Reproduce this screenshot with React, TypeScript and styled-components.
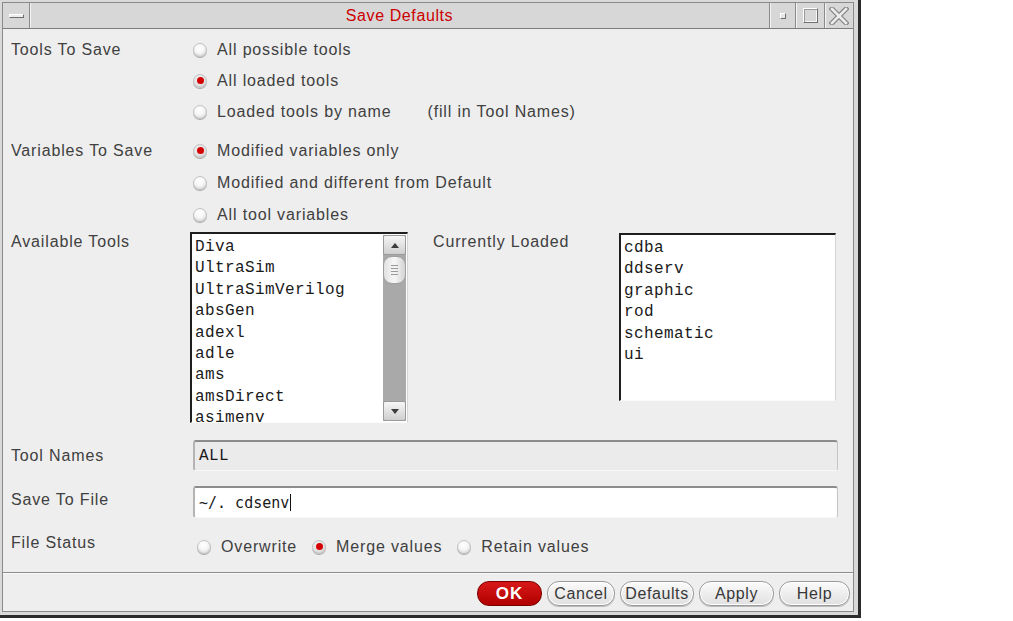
import React from "react";
import styled, { createGlobalStyle, css } from "styled-components";

const Global = createGlobalStyle`
  html, body { margin: 0; padding: 0; background: #ffffff; }
  body { font-family: "Liberation Sans", Arial, sans-serif; }
`;

const Window = styled.div`
  width: 861px;
  height: 618px;
  box-sizing: border-box;
  background: #d9d9d9;
  padding: 2px 4px 3px 2px;
  border-right: 3px solid #2c2c2c;
  border-bottom: 3px solid #2c2c2c;
  display: flex;
`;

const Inner = styled.div`
  flex: 1;
  border: 1px solid #8a8a8a;
  background: #eeeeee;
  display: flex;
  flex-direction: column;
`;

const TitleBar = styled.div`
  height: 26px;
  box-sizing: border-box;
  border-bottom: 1px solid #7c7c7c;
  background: #d7d7d7;
  display: flex;
`;

const MenuButton = styled.div`
  width: 26px;
  border-right: 1px solid #8a8a8a;
  display: flex;
  align-items: center;
  justify-content: center;
`;

const MenuBar = styled.span`
  width: 15px;
  height: 4px;
  box-sizing: border-box;
  background: #ececec;
  border-top: 1px solid #ffffff;
  border-left: 1px solid #ffffff;
  border-bottom: 1px solid #6e6e6e;
  border-right: 1px solid #6e6e6e;
`;

const Title = styled.div`
  flex: 1;
  text-align: center;
  color: #cc0000;
  font-size: 16px;
  letter-spacing: 0.6px;
  line-height: 25px;
  box-shadow: inset 1px 0 #f2f2f2;
`;

const WinBtn = styled.div<{ $w: number }>`
  width: ${(p) => p.$w}px;
  border-left: 1px solid #8a8a8a;
  box-shadow: inset 1px 0 #f4f4f4;
  display: flex;
  align-items: center;
  justify-content: center;
`;

const MinBox = styled.span`
  width: 6px;
  height: 6px;
  box-sizing: border-box;
  background: #e6e6e6;
  border-top: 1px solid #ffffff;
  border-left: 1px solid #ffffff;
  border-right: 1px solid #6e6e6e;
  border-bottom: 1px solid #6e6e6e;
`;

const MaxBox = styled.span`
  width: 15px;
  height: 15px;
  box-sizing: border-box;
  border-top: 1px solid #ffffff;
  border-left: 1px solid #ffffff;
  border-right: 1px solid #6e6e6e;
  border-bottom: 1px solid #6e6e6e;
  box-shadow: inset 1px 1px #9a9a9a, inset -1px -1px #f8f8f8;
`;

const Body = styled.div`
  flex: 1;
  padding: 5px 8px 0 8px;
  display: flex;
  flex-direction: column;
`;

const Section = styled.div<{ $mt?: number }>`
  display: grid;
  grid-template-columns: 179px 1fr;
  margin-top: ${(p) => p.$mt ?? 0}px;
`;

const Label = styled.div<{ $lh: number }>`
  font-size: 16px;
  letter-spacing: 0.85px;
  color: #404040;
  line-height: ${(p) => p.$lh}px;
  white-space: nowrap;
`;

const OptionList = styled.div`
  display: flex;
  flex-direction: column;
  padding-left: 3px;
`;

const Option = styled.div<{ $h: number }>`
  height: ${(p) => p.$h}px;
  display: flex;
  align-items: center;
  gap: 10px;
  font-size: 16px;
  letter-spacing: 0.85px;
  color: #404040;
  white-space: nowrap;
`;

const Hint = styled.span`
  margin-left: 36px;
`;

const RadioDot = styled.span<{ $on?: boolean }>`
  width: 14px;
  height: 14px;
  flex: none;
  box-sizing: border-box;
  border-radius: 50%;
  border: 1px solid #c2c2c2;
  background: radial-gradient(circle at 45% 35%, #ffffff 0, #f6f6f6 45%, #c9c9c9 100%);
  box-shadow: 0 1px 0 #a8a8a8;
  position: relative;
  ${(p) =>
    p.$on &&
    css`
      background: radial-gradient(circle at 45% 35%, #f4f4f4 0, #e0e0e0 60%, #b8b8b8 100%);
      &::after {
        content: "";
        position: absolute;
        left: 3px;
        top: 2px;
        width: 7px;
        height: 7px;
        border-radius: 50%;
        background: #d40000;
      }
    `}
`;

const ToolsRow = styled.div`
  display: flex;
  align-items: flex-start;
`;

const ListBox = styled.div<{ $w: number; $h: number; $mt?: number }>`
  width: ${(p) => p.$w}px;
  height: ${(p) => p.$h}px;
  margin-top: ${(p) => p.$mt ?? 0}px;
  box-sizing: border-box;
  background: #ffffff;
  border-top: 2px solid #1e1e1e;
  border-left: 2px solid #1e1e1e;
  border-right: 1px solid #d4d4d4;
  border-bottom: 1px solid #fafafa;
  display: flex;
  overflow: hidden;
  flex: none;
`;

const Items = styled.div`
  flex: 1;
  padding: 3px 0 0 3px;
  font-family: "Liberation Mono", "Courier New", monospace;
  font-size: 16px;
  letter-spacing: 0.4px;
  line-height: 21.4px;
  color: #1a1a1a;
  overflow: hidden;
  white-space: pre;
`;

const SideLabel = styled(Label)`
  width: 186px;
  margin-left: 25px;
  flex: none;
`;

const Scrollbar = styled.div`
  width: 23px;
  margin: 1px 1px 1px 0;
  background: #a9a9a9;
  display: flex;
  flex-direction: column;
`;

const ArrowBtn = styled.div`
  height: 20px;
  box-sizing: border-box;
  background: linear-gradient(#f6f6f6, #cfcfcf);
  border: 1px solid #9a9a9a;
  border-radius: 2px;
  display: flex;
  align-items: center;
  justify-content: center;
`;

const Thumb = styled.div`
  height: 28px;
  margin-top: 1px;
  box-sizing: border-box;
  border-radius: 9px;
  border: 1px solid #a0a0a0;
  background: linear-gradient(90deg, #e2e2e2, #f6f6f6 50%, #d4d4d4);
  display: flex;
  flex-direction: column;
  align-items: center;
  justify-content: center;
  gap: 2px;
`;

const Grip = styled.span`
  width: 7px;
  height: 1px;
  background: #9a9a9a;
`;

const Track = styled.div`
  flex: 1;
`;

const Field = styled.div<{ $disabled?: boolean; $h: number }>`
  margin-left: 3px;
  width: 645px;
  height: ${(p) => p.$h}px;
  box-sizing: border-box;
  background: ${(p) => (p.$disabled ? "#ebebeb" : "#ffffff")};
  border-top: 2px solid #8c8c8c;
  border-left: 2px solid #b4b4b4;
  border-right: 1px solid #c4c4c4;
  border-bottom: 1px solid #f8f8f8;
  border-radius: 3px;
  padding-left: 4px;
  display: flex;
  align-items: center;
  color: #1a1a1a;
`;

const MonoText = styled.span<{ $sans?: boolean }>`
  font-family: ${(p) =>
    p.$sans ? `"DejaVu Sans Mono", monospace` : `"Liberation Mono", "Courier New", monospace`};
  font-size: ${(p) => (p.$sans ? 15 : 16)}px;
  letter-spacing: ${(p) => (p.$sans ? 0 : 0.4)}px;
  white-space: pre;
`;

const Caret = styled.span`
  width: 1px;
  height: 17px;
  background: #111111;
  margin-left: 1px;
`;

const StatusRow = styled.div`
  display: flex;
  align-items: center;
  height: 30px;
  padding-left: 7px;
  gap: 15px;
`;

const Divider = styled.div`
  border-top: 1px solid #8c8c8c;
  border-bottom: 1px solid #fafafa;
`;

const ButtonBar = styled.div`
  height: 37px;
  box-sizing: border-box;
  padding: 7px 3px 0 0;
  display: flex;
  justify-content: flex-end;
  align-items: flex-start;
  gap: 5px;
`;

const Btn = styled.button<{ $w: number; $primary?: boolean }>`
  width: ${(p) => p.$w}px;
  height: 25px;
  box-sizing: border-box;
  padding: 0;
  border-radius: 12px;
  font-family: "Liberation Sans", Arial, sans-serif;
  font-size: 16px;
  letter-spacing: 0.6px;
  cursor: pointer;
  ${(p) =>
    p.$primary
      ? css`
          background: linear-gradient(#d81818, #b00000);
          border: 1px solid #7a0000;
          color: #ffffff;
          font-weight: bold;
          font-size: 17px;
          letter-spacing: 1px;
        `
      : css`
          background: linear-gradient(#fbfbfb, #e0e0e0);
          border: 1px solid #9a9a9a;
          box-shadow: inset 0 0 0 1px #ffffff, 0 1px 0 #bcbcbc;
          color: #383838;
        `}
`;

const Arrow = ({ up }: { up?: boolean }) => (
  <svg width="10" height="7" viewBox="0 0 10 7">
    <path d={up ? "M1 6 L5 1 L9 6 Z" : "M1 1 L5 6 L9 1 Z"} fill="#3c3c3c" />
  </svg>
);

const CloseIcon = () => (
  <svg width="20" height="18" viewBox="0 0 20 18">
    <path d="M3 2 L17 16 M17 2 L3 16" stroke="#858585" strokeWidth="5" strokeLinecap="square" />
    <path d="M3 2 L17 16 M17 2 L3 16" stroke="#ececec" strokeWidth="2.6" strokeLinecap="square" />
  </svg>
);

const Radio = ({ on, label, h }: { on?: boolean; label: React.ReactNode; h: number }) => (
  <Option $h={h}>
    <RadioDot $on={on} />
    <span>{label}</span>
  </Option>
);

const available = [
  "Diva",
  "UltraSim",
  "UltraSimVerilog",
  "absGen",
  "adexl",
  "adle",
  "ams",
  "amsDirect",
  "asimenv",
];
const loaded = ["cdba", "ddserv", "graphic", "rod", "schematic", "ui"];

export default function App() {
  return (
    <>
      <Global />
      <Window>
        <Inner>
          <TitleBar>
            <MenuButton>
              <MenuBar />
            </MenuButton>
            <Title>Save Defaults</Title>
            <WinBtn $w={25}>
              <MinBox />
            </WinBtn>
            <WinBtn $w={28}>
              <MaxBox />
            </WinBtn>
            <WinBtn $w={28}>
              <CloseIcon />
            </WinBtn>
          </TitleBar>
          <Body>
            <Section>
              <Label $lh={31}>Tools To Save</Label>
              <OptionList>
                <Radio h={31} label="All possible tools" />
                <Radio h={31} on label="All loaded tools" />
                <Radio
                  h={31}
                  label={
                    <>
                      Loaded tools by name<Hint>(fill in Tool Names)</Hint>
                    </>
                  }
                />
              </OptionList>
            </Section>
            <Section $mt={8}>
              <Label $lh={32}>Variables To Save</Label>
              <OptionList>
                <Radio h={32} on label="Modified variables only" />
                <Radio h={32} label="Modified and different from Default" />
                <Radio h={32} label="All tool variables" />
              </OptionList>
            </Section>
            <Section $mt={1}>
              <Label $lh={20}>Available Tools</Label>
              <ToolsRow>
                <ListBox $w={218} $h={191}>
                  <Items>
                    {available.map((t) => (
                      <div key={t}>{t}</div>
                    ))}
                  </Items>
                  <Scrollbar>
                    <ArrowBtn>
                      <Arrow up />
                    </ArrowBtn>
                    <Thumb>
                      <Grip />
                      <Grip />
                      <Grip />
                      <Grip />
                    </Thumb>
                    <Track />
                    <ArrowBtn>
                      <Arrow />
                    </ArrowBtn>
                  </Scrollbar>
                </ListBox>
                <SideLabel $lh={20}>Currently Loaded</SideLabel>
                <ListBox $w={217} $h={168} $mt={1}>
                  <Items>
                    {loaded.map((t) => (
                      <div key={t}>{t}</div>
                    ))}
                  </Items>
                </ListBox>
              </ToolsRow>
            </Section>
            <Section $mt={17}>
              <Label $lh={31}>Tool Names</Label>
              <Field $disabled $h={31}>
                <MonoText>ALL</MonoText>
              </Field>
            </Section>
            <Section $mt={15}>
              <Label $lh={28}>Save To File</Label>
              <Field $h={32}>
                <MonoText $sans>~/. cdsenv</MonoText>
                <Caret />
              </Field>
            </Section>
            <Section $mt={14}>
              <Label $lh={22}>File Status</Label>
              <StatusRow>
                <Radio h={30} label="Overwrite" />
                <Radio h={30} on label="Merge values" />
                <Radio h={30} label="Retain values" />
              </StatusRow>
            </Section>
          </Body>
          <Divider />
          <ButtonBar>
            <Btn $w={65} $primary>
              OK
            </Btn>
            <Btn $w={68}>Cancel</Btn>
            <Btn $w={74}>Defaults</Btn>
            <Btn $w={75}>Apply</Btn>
            <Btn $w={71}>Help</Btn>
          </ButtonBar>
        </Inner>
      </Window>
    </>
  );
}
